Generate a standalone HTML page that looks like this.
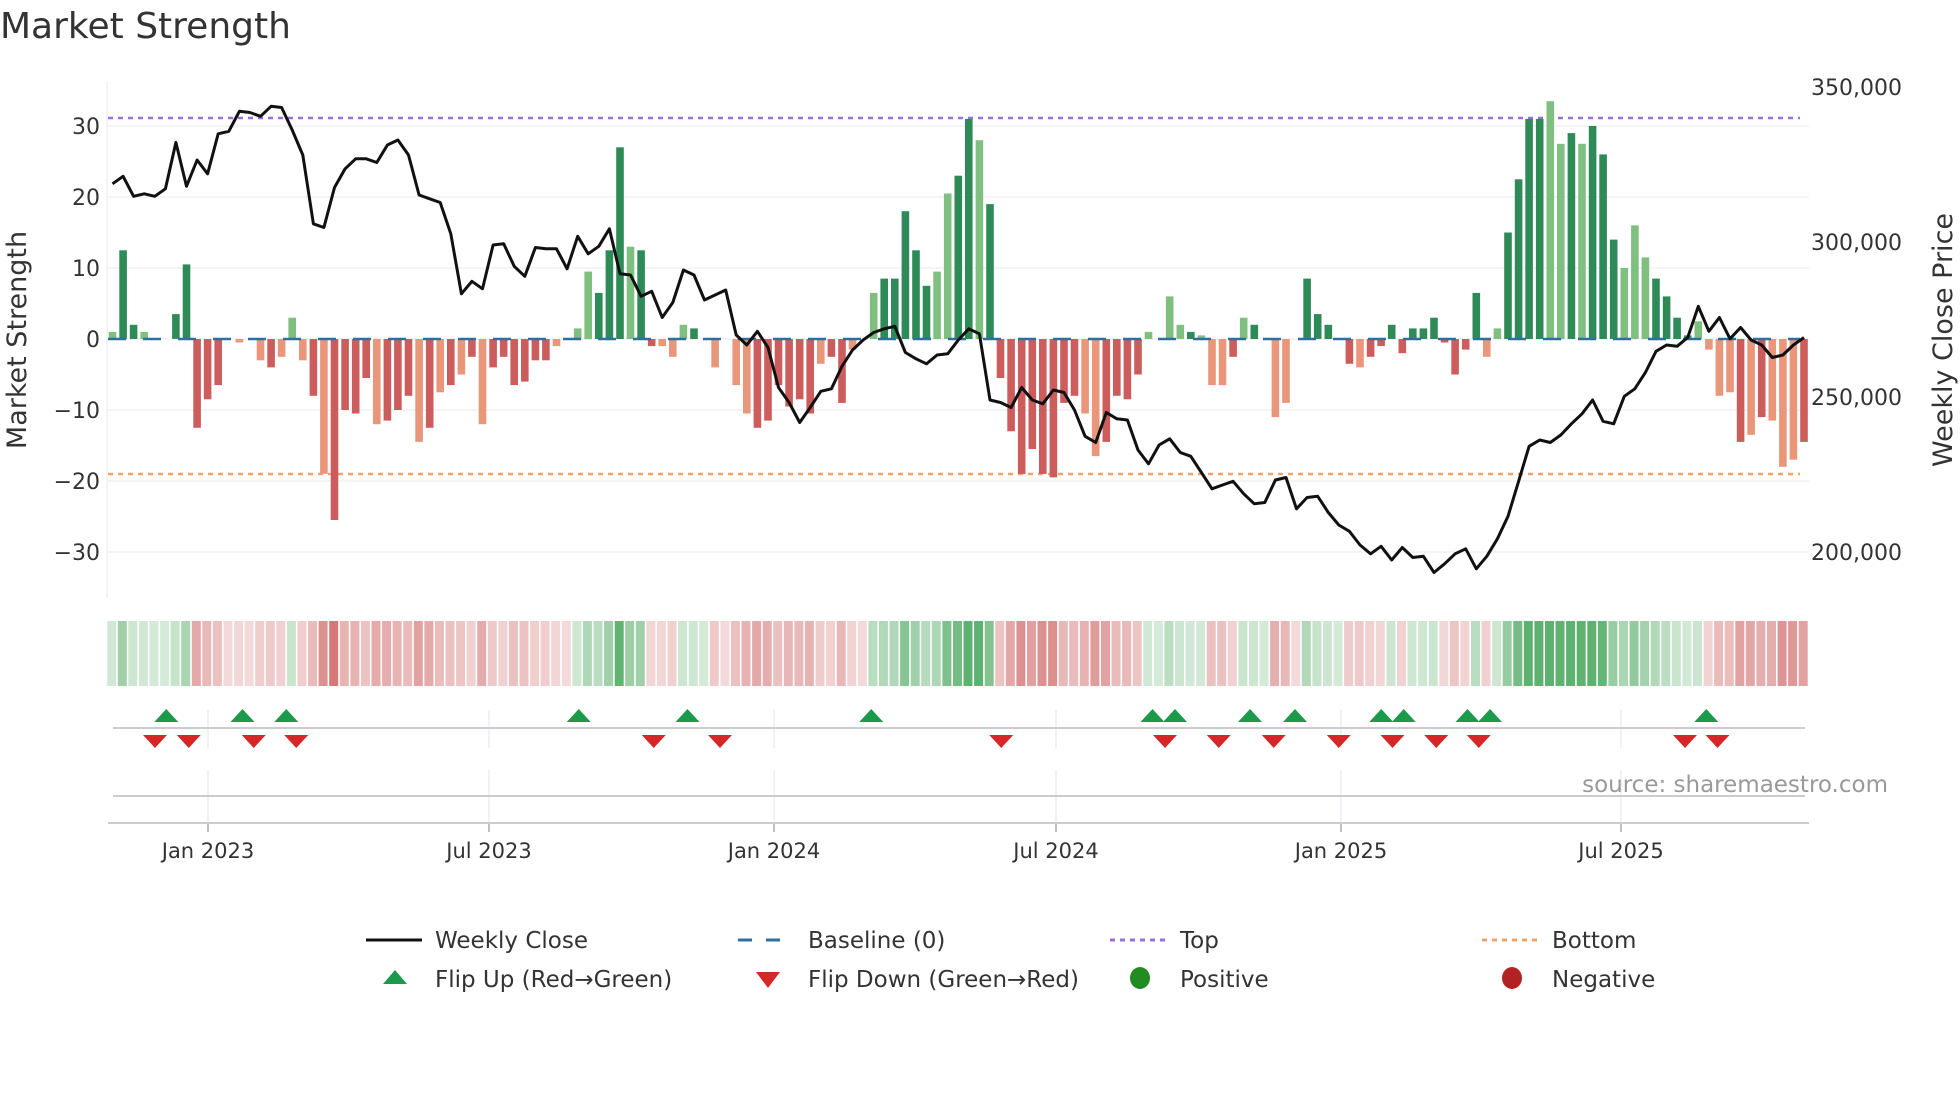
<!DOCTYPE html>
<html><head><meta charset="utf-8"><style>
html,body{margin:0;padding:0;background:#fff;}
svg{display:block;font-family:"DejaVu Sans","Liberation Sans",sans-serif;}
</style></head><body>
<svg id="s" width="1960" height="1102" viewBox="0 0 1960 1102" xmlns="http://www.w3.org/2000/svg">
<text x="0" y="38" font-size="36" fill="#333">Market Strength</text>
<g id="g"></g>
<text x="1888" y="792" font-size="23" fill="#999" text-anchor="end">source: sharemaestro.com</text>
<text transform="translate(26,340) rotate(-90)" font-size="27" fill="#333" text-anchor="middle">Market Strength</text>
<text transform="translate(1952,340) rotate(-90)" font-size="27" fill="#333" text-anchor="middle">Weekly Close Price</text>
<g font-size="23" fill="#333">
<line x1="366" y1="940" x2="422" y2="940" stroke="#111" stroke-width="3"/>
<text x="435" y="948">Weekly Close</text>
<line x1="738" y1="940" x2="794" y2="940" stroke="#2c6fa0" stroke-width="3" stroke-dasharray="14 14"/>
<text x="808" y="948">Baseline (0)</text>
<line x1="1110" y1="940" x2="1166" y2="940" stroke="#9b6ee0" stroke-width="3" stroke-dasharray="5 5"/>
<text x="1180" y="948">Top</text>
<line x1="1482" y1="940" x2="1538" y2="940" stroke="#f0a46a" stroke-width="3" stroke-dasharray="5 5"/>
<text x="1552" y="948">Bottom</text>
<polygon points="395,970 407,984 383,984" fill="#1a9a4a"/>
<text x="435" y="987">Flip Up (Red→Green)</text>
<polygon points="756,972 780,972 768,988" fill="#d62728"/>
<text x="808" y="987">Flip Down (Green→Red)</text>
<ellipse cx="1140" cy="978" rx="10" ry="11" fill="#228b22"/>
<text x="1180" y="987">Positive</text>
<ellipse cx="1512" cy="978" rx="10" ry="11" fill="#b22222"/>
<text x="1552" y="987">Negative</text>
</g>
</svg>
<script>
var V=[1,12.5,2,1,0,0,3.5,10.5,-12.5,-8.5,-6.5,0,-0.5,0,-3,-4,-2.5,3,-3,-8,-19,-25.5,-10,-10.5,-5.5,-12,-11.5,-10,-8,-14.5,-12.5,-7.5,-6.5,-5,-2.5,-12,-4,-2.5,-6.5,-6,-3,-3,-1,0,1.5,9.5,6.5,12.5,27,13,12.5,-1,-1,-2.5,2,1.5,0,-4,0,-6.5,-10.5,-12.5,-11.5,-6.5,-9.5,-8.5,-10.5,-3.5,-2.5,-9,-1.5,0,6.5,8.5,8.5,18,12.5,7.5,9.5,20.5,23,31,28,19,-5.5,-13,-19,-15.5,-19,-19.5,-9,-8,-10.5,-16.5,-14.5,-8,-8.5,-5,1,0,6,2,1,0.5,-6.5,-6.5,-2.5,3,2,0,-11,-9,0,8.5,3.5,2,0,-3.5,-4,-2.5,-1,2,-2,1.5,1.5,3,-0.5,-5,-1.5,6.5,-2.5,1.5,15,22.5,31,31,33.5,27.5,29,27.5,30,26,14,10,16,11.5,8.5,6,3,0.5,2.5,-1.5,-8,-7.5,-14.5,-13.5,-11,-11.5,-18,-17,-14.5];
var D="0110001111100101000101111011101010101111110000111011000110000111111011010111110011011111111100111100001000101100111101011111111111001111001011100011110000101000110010011001";
var P=[147,141,157,155,157,151,114,149,128,139,107,105,89,90,93,85,86,104,124,179,182,150,135,127,127,130,116,112,124,156,159,162,187,235,225,231,196,195,213,221,198,199,199,215,189,203,197,183,219,220,237,233,254,242,216,220,240,236,232,268,276,265,278,310,322,338,326,313,311,293,280,272,266,263,261,282,287,291,284,283,272,263,267,320,322,326,310,320,323,312,314,328,349,354,330,335,336,360,371,356,351,362,365,378,391,388,385,395,403,402,384,382,407,398,397,410,420,425,436,443,437,448,438,446,445,458,451,443,439,455,445,431,413,385,357,352,354,348,339,331,320,337,339,317,311,298,281,276,277,270,245,265,254,271,262,272,276,286,284,276,270];
var n=V.length,x0=112.5,dx=(1804-112.5)/(n-1);
function yS(v){return 339-v*7.1;}
var h='';
[30,20,10,0,-10,-20,-30].forEach(function(v){h+='<line x1="108" x2="1809" y1="'+yS(v)+'" y2="'+yS(v)+'" stroke="#eef0f3" stroke-width="1.5"/>';
h+='<text x="100" y="'+(yS(v)+8)+'" font-size="22" fill="#333" text-anchor="end">'+(v<0?'−'+(-v):v)+'</text>';});
h+='<line x1="107" x2="107" y1="81" y2="598" stroke="#eef0f3" stroke-width="1.5"/>';
[[350000,87],[300000,242],[250000,397],[200000,552]].forEach(function(a){h+='<text x="1811" y="'+(a[1]+8)+'" font-size="22" fill="#333">'+a[0].toLocaleString('en-US')+'</text>';});
h+='<line x1="108" x2="1800" y1="118" y2="118" stroke="#9b6ee0" stroke-width="2.5" stroke-dasharray="5 5"/>';
h+='<line x1="108" x2="1800" y1="474" y2="474" stroke="#f0a46a" stroke-width="2.5" stroke-dasharray="5 5"/>';
var last=1;
for(var i=0;i<n;i++){var v=V[i],x=x0+i*dx-3.8,dk=D[i]=='1';
 if(v!=0){var c=v>0?(dk?'#2e8b57':'#7fbf7f'):(dk?'#cd5c5c':'#e9967a');
 var y=v>0?yS(v):339;h+='<rect x="'+x.toFixed(1)+'" y="'+y.toFixed(1)+'" width="7.6" height="'+Math.abs(v*7.1).toFixed(1)+'" fill="'+c+'"/>';}
 if(v>0)last=1;else if(v<0)last=-1;
 var s=last,m=Math.min(Math.abs(v)/28,1),a=0.22+m*0.6;
 h+='<rect x="'+(x-1.5).toFixed(1)+'" y="621" width="9" height="65" fill="'+(s>0?'rgb(60,160,80)':'rgb(200,80,80)')+'" fill-opacity="'+a.toFixed(2)+'"/>';}
h+='<line x1="108" x2="1800" y1="339" y2="339" stroke="#2c6fa0" stroke-width="2.5" stroke-dasharray="18 17"/>';
var pts=P.map(function(y,i){return (x0+i*(1804-112.5)/(P.length-1)).toFixed(1)+','+(y*1.25).toFixed(1);}).join(' ');
h+='<polyline points="'+pts+'" fill="none" stroke="#111" stroke-width="3" stroke-linejoin="round"/>';
[['Jan 2023',208],['Jul 2023',489],['Jan 2024',774],['Jul 2024',1056],['Jan 2025',1341],['Jul 2025',1621]].forEach(function(t){
 h+='<line x1="'+t[1]+'" x2="'+t[1]+'" y1="710" y2="748" stroke="#eceef2" stroke-width="1.5"/>';
 h+='<line x1="'+t[1]+'" x2="'+t[1]+'" y1="770" y2="822" stroke="#eceef2" stroke-width="1.5"/>';
 h+='<line x1="'+t[1]+'" x2="'+t[1]+'" y1="822" y2="832" stroke="#aaa" stroke-width="1.5"/>';
 h+='<text x="'+t[1]+'" y="858" font-size="21" fill="#333" text-anchor="middle">'+t[0]+'</text>';});
h+='<line x1="113" x2="1805" y1="728" y2="728" stroke="#ccc" stroke-width="2"/>';
h+='<line x1="113" x2="1805" y1="796" y2="796" stroke="#ccc" stroke-width="2"/>';
h+='<line x1="108" x2="1809" y1="823" y2="823" stroke="#ccc" stroke-width="2"/>';
[133,194,229,463,550,697,922,940,1000,1036,1105,1123,1174,1192,1365].forEach(function(d){var x=d*1.25;h+='<polygon points="'+x+',709 '+(x+12)+',722 '+(x-12)+',722" fill="#1a9a4a"/>';});
[124,151,203,237,523,576,801,932,975,1019,1071,1114,1149,1183,1348,1374].forEach(function(d){var x=d*1.25;h+='<polygon points="'+(x-12)+',735 '+(x+12)+',735 '+x+',748" fill="#d62728"/>';});
document.getElementById('g').innerHTML=h;
</script>
</body></html>
